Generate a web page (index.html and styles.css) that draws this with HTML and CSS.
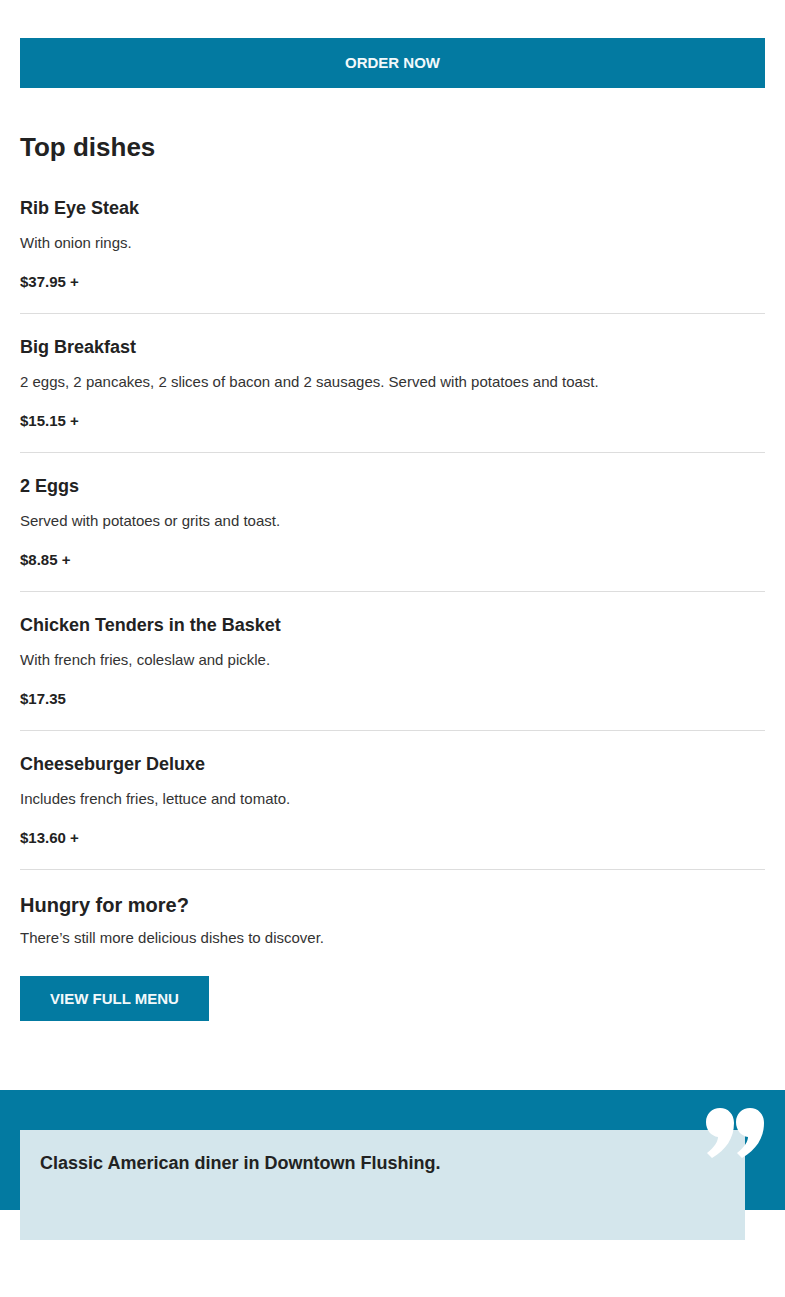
FILE: index.html
```html
<!DOCTYPE html>
<html lang="en">
<head>
    <meta charset="UTF-8">
    <meta name="viewport" content="width=device-width, initial-scale=1.0">
    <title>Top dishes</title>
    <link rel="stylesheet" href="styles.css">
</head>
<body>

<div class="container">
    <a class="order-btn" href="#">ORDER NOW</a>

    <h2 class="section-title">Top dishes</h2>

    <div class="dishes">
        <div class="dish">
            <h3>Rib Eye Steak</h3>
            <p class="desc">With onion rings.</p>
            <p class="price">$37.95 +</p>
        </div>
        <div class="dish">
            <h3>Big Breakfast</h3>
            <p class="desc">2 eggs, 2 pancakes, 2 slices of bacon and 2 sausages. Served with potatoes and toast.</p>
            <p class="price">$15.15 +</p>
        </div>
        <div class="dish">
            <h3>2 Eggs</h3>
            <p class="desc">Served with potatoes or grits and toast.</p>
            <p class="price">$8.85 +</p>
        </div>
        <div class="dish">
            <h3>Chicken Tenders in the Basket</h3>
            <p class="desc">With french fries, coleslaw and pickle.</p>
            <p class="price">$17.35</p>
        </div>
        <div class="dish">
            <h3>Cheeseburger Deluxe</h3>
            <p class="desc">Includes french fries, lettuce and tomato.</p>
            <p class="price">$13.60 +</p>
        </div>
    </div>

    <div class="more">
        <h3>Hungry for more?</h3>
        <p>There’s still more delicious dishes to discover.</p>
        <a class="menu-btn" href="#">VIEW FULL MENU</a>
    </div>
</div>

<section class="quote-band">
    <svg class="quote-mark" viewBox="0 0 60 50" width="60" height="50">
        <path d="M15 0 C23 0 29 6 29 15 C29 30 21 42 7 50 L2 45 C10 39 13 33 13 29 C6 28 1 22 1 14 C1 6 7 0 15 0 Z" fill="#fff"/>
        <path d="M45 0 C53 0 59 6 59 15 C59 30 51 42 37 50 L32 45 C40 39 43 33 43 29 C36 28 31 22 31 14 C31 6 37 0 45 0 Z" fill="#fff"/>
    </svg>
    <div class="quote-box">
        <p>Classic American diner in Downtown Flushing.</p>
    </div>
</section>

</body>
</html>
```

FILE: styles.css
```css
body {
    font-family: "Liberation Sans", Arial, sans-serif;
    background-color: #fff;
    color: #222;
    margin: 0;
    padding: 0;
}
.container {
    padding: 38px 20px 0;
}
.order-btn {
    display: block;
    height: 50px;
    line-height: 50px;
    background-color: #037aa1;
    color: #f2f9fb;
    text-align: center;
    font-size: 15px;
    font-weight: bold;
    text-decoration: none;
}
.section-title {
    font-size: 26px;
    line-height: 36px;
    margin: 41px 0 10px;
    color: #222;
}
.dish {
    padding: 22px 0 21px;
    border-bottom: 1px solid #ddd;
}
.dish h3 {
    font-size: 18px;
    line-height: 22px;
    margin: 0 0 14px;
    color: #222;
}
.dish .desc {
    font-size: 15px;
    line-height: 20px;
    margin: 0 0 19px;
    color: #333;
}
.dish .price {
    font-size: 15px;
    line-height: 20px;
    font-weight: bold;
    margin: 0;
    color: #222;
}
.more {
    padding-top: 23px;
}
.more h3 {
    font-size: 20px;
    line-height: 24px;
    margin: 0 0 11px;
}
.more p {
    font-size: 15px;
    line-height: 20px;
    margin: 0 0 28px;
    color: #333;
}
.menu-btn {
    display: inline-block;
    height: 45px;
    line-height: 45px;
    padding: 0 30px;
    background-color: #037aa1;
    color: #f2f9fb;
    font-size: 15px;
    font-weight: bold;
    text-decoration: none;
}
.quote-band {
    position: relative;
    margin-top: 69px;
    margin-bottom: 60px;
    background-color: #037aa1;
    padding: 40px 40px 0 20px;
    height: 80px;
}
.quote-mark {
    position: absolute;
    top: 18px;
    right: 20px;
}
.quote-box {
    background-color: #d4e6ec;
    height: 110px;
    padding: 20px;
    box-sizing: border-box;
}
.quote-box p {
    margin: 0;
    font-size: 18px;
    line-height: 26px;
    font-weight: bold;
    color: #222;
}
```
